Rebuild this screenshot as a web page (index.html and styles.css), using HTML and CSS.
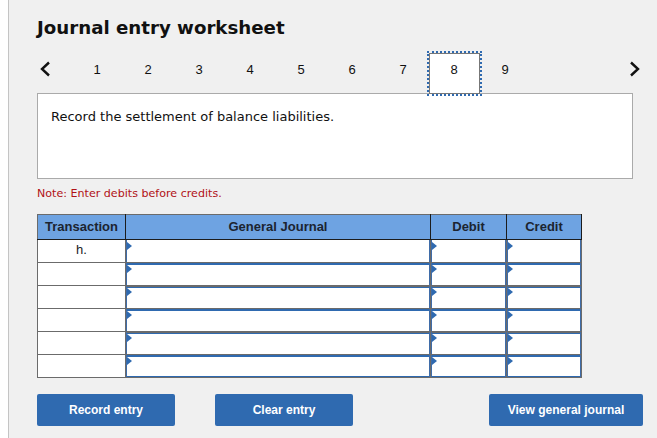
FILE: index.html
```html
<!DOCTYPE html>
<html lang="en">
<head>
<meta charset="utf-8">
<title>Journal entry worksheet</title>
<link rel="stylesheet" href="styles.css">
</head>
<body>
<main class="panel">
  <h1 class="title">Journal entry worksheet</h1>
  <nav class="tabs">
    <span class="arrow arrow-prev"><svg width="12" height="16" viewBox="0 0 12 16"><path d="M10 1.5 3 8l7 6.5" fill="none" stroke="#111" stroke-width="2.4"/></svg></span>
    <span class="tab">1</span><span class="tab">2</span><span class="tab">3</span><span class="tab">4</span><span class="tab">5</span><span class="tab">6</span><span class="tab">7</span><span class="tab tab-active">8</span><span class="tab">9</span>
    <span class="arrow arrow-next"><svg width="12" height="16" viewBox="0 0 12 16"><path d="M2 1.5 9 8l-7 6.5" fill="none" stroke="#111" stroke-width="2.4"/></svg></span>
  </nav>
  <section class="prompt">Record the settlement of balance liabilities.</section>
  <p class="note">Note: Enter debits before credits.</p>
  <table class="journal">
    <colgroup><col class="c-t"><col class="c-g"><col class="c-d"><col class="c-c"></colgroup>
    <thead><tr><th>Transaction</th><th>General Journal</th><th>Debit</th><th>Credit</th></tr></thead>
    <tbody>
      <tr><td class="tx">h.</td><td class="in"></td><td class="in"></td><td class="in"></td></tr>
      <tr><td class="tx"></td><td class="in"></td><td class="in"></td><td class="in"></td></tr>
      <tr><td class="tx"></td><td class="in"></td><td class="in"></td><td class="in"></td></tr>
      <tr><td class="tx"></td><td class="in"></td><td class="in"></td><td class="in"></td></tr>
      <tr><td class="tx"></td><td class="in"></td><td class="in"></td><td class="in"></td></tr>
      <tr><td class="tx"></td><td class="in"></td><td class="in"></td><td class="in"></td></tr>
    </tbody>
  </table>
  <div class="actions">
    <button class="btn btn-s">Record entry</button>
    <button class="btn btn-s">Clear entry</button>
    <button class="btn btn-l">View general journal</button>
  </div>
</main>
</body>
</html>
```

FILE: styles.css
```css
html, body { margin: 0; padding: 0; background: #fff; }
body { width: 657px; height: 438px; overflow: hidden; padding-left: 8px; box-sizing: border-box; }
.panel {
  height: 438px; box-sizing: border-box; background: #f0f0f0;
  border-left: 1px solid #c4c4c4; padding: 17px 14px 0 28px;
  font-family: "Liberation Sans", Arial, sans-serif; color: #111;
}
.title {
  margin: 0; font: bold 18.2px/22px "DejaVu Sans", Verdana, sans-serif; color: #111;
}
.tabs { display: flex; align-items: center; height: 41px; margin-top: 14px; position: relative; z-index: 2; }
.arrow { display: flex; width: 34.5px; padding-bottom: 10px; }
.arrow-prev { padding-left: 2px; width: 32.5px; }
.arrow-next { margin-left: auto; width: 12px; margin-right: 2px; }
.tab { width: 51px; height: 41px; box-sizing: border-box; padding-bottom: 9px; display: flex; align-items: center; justify-content: center; font-size: 13px; }
.tab-active { background: #fff; border: 1px solid #777; outline: 2px dotted #2f6ab0; outline-offset: 0; }
.prompt {
  width: 596px; height: 86px; box-sizing: border-box; margin-top: -1px;
  background: #fff; border: 1px solid #aaa; padding: 14px 13px;
  font: 13px/17px "DejaVu Sans", Verdana, sans-serif;
}
.note { margin: 8px 0 0; font: 11.1px/14px "DejaVu Sans", Verdana, sans-serif; color: #b01116; }
.journal {
  margin-top: 13px; width: 544px; height: 164px; table-layout: fixed;
  border-collapse: collapse; background: #fff; border: 1px solid #6b6b6b;
}
.c-t { width: 88px; } .c-g { width: 305px; } .c-d { width: 76px; } .c-c { width: 75px; }
.journal th {
  height: 25px; padding: 0 0 1px; box-sizing: border-box; background: #6ea3e2; color: #1c2430;
  font-size: 13px; font-weight: bold; text-align: center;
  border: 1px solid #1c1c1c; border-top-color: #6b6b6b; border-left-color: #1c1c1c;
}
.journal th:first-child { border-left-color: #6b6b6b; }
.journal td { height: 23px; padding: 0; box-sizing: border-box; border: 1px solid #6b6b6b; }
.tx { text-align: center; font-size: 13px; color: #222; vertical-align: top; line-height: 20px; }
.in { position: relative; background: #fff; box-shadow: inset 1px 0 0 #3f6ca8, inset -1px 0 0 #3f6ca8; }
tbody tr:nth-child(even) .in { box-shadow: inset 1px 0 0 #3f6ca8, inset -1px 0 0 #3f6ca8, inset 0 2px 0 #2f6ab0; }
tbody tr:nth-child(odd) .in { box-shadow: inset 1px 0 0 #3f6ca8, inset -1px 0 0 #3f6ca8, inset 0 1px 0 #6b6b6b, inset 0 2px 0 #2f6ab0; }
tbody tr:first-child .in { box-shadow: inset 1px 0 0 #3f6ca8, inset -1px 0 0 #3f6ca8; }
tbody tr:last-child .in { box-shadow: inset 1px 0 0 #3f6ca8, inset -1px 0 0 #3f6ca8, inset 0 2px 0 #2f6ab0, inset 0 -1px 0 #2f6ab0; }
.in::before {
  content: ""; position: absolute; left: 1px; top: 2px;
  border-left: 5px solid #2f6ab0; border-top: 4px solid transparent; border-bottom: 4px solid transparent;
}
.actions { display: flex; gap: 40px; margin-top: 16px; }
.btn {
  height: 32px; border: 0; border-radius: 2px; background: #2f6ab0; color: #fff; padding: 0;
  font: bold 12px "Liberation Sans", Arial, sans-serif;
}
.btn-s { width: 138px; }
.btn-l { width: 154px; margin-left: auto; }
```
